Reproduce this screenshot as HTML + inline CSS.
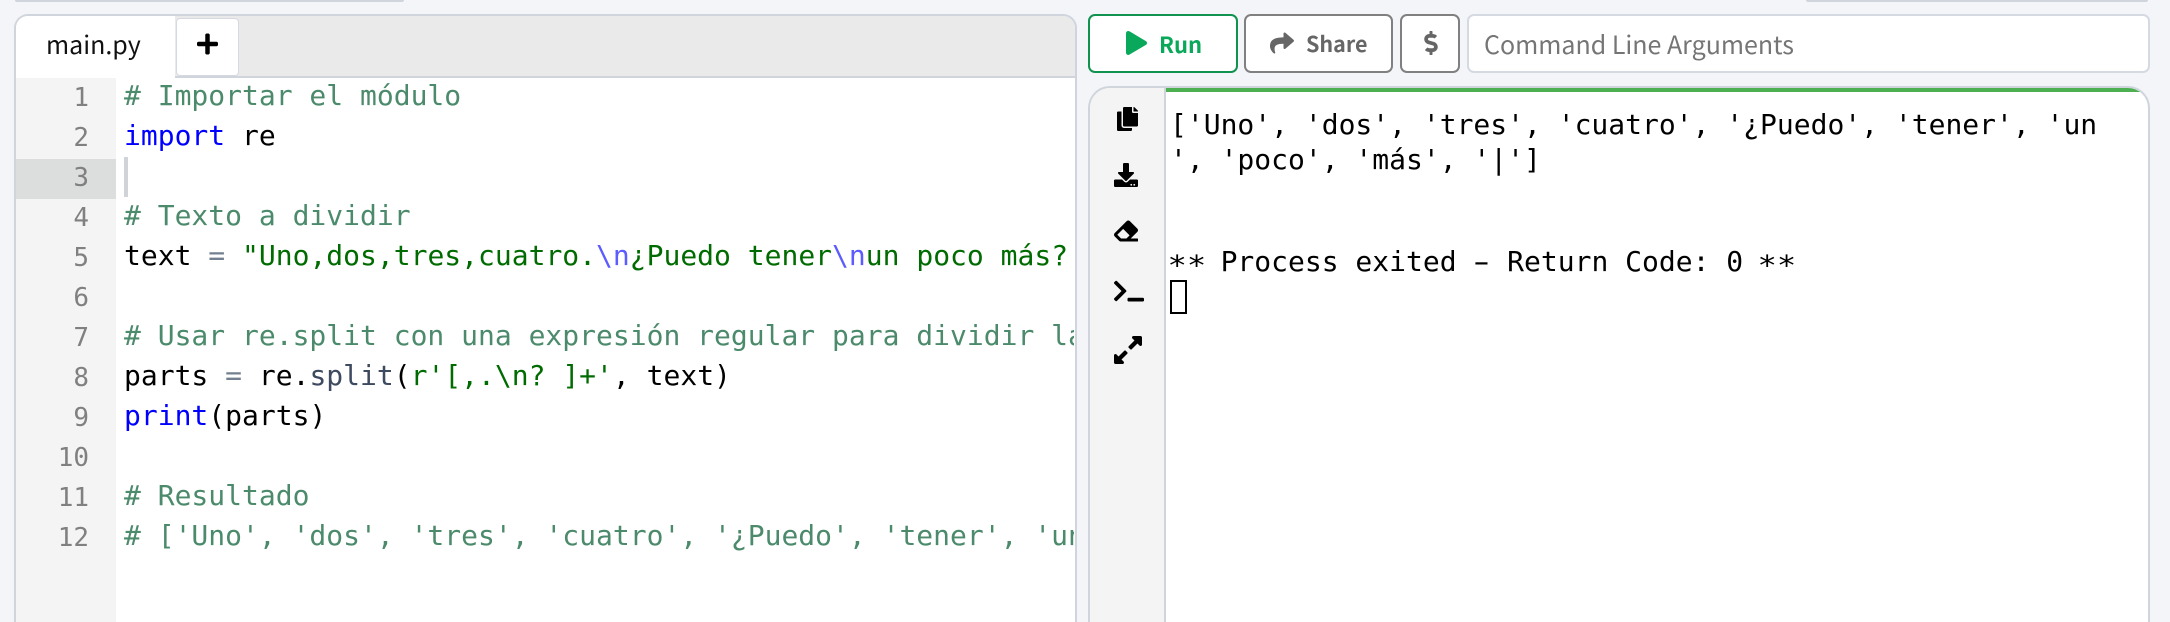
<!DOCTYPE html>
<html lang="es">
<head>
<meta charset="utf-8">
<title>main.py</title>
<style>
html,body{margin:0;padding:0;background:#f3f5f9;width:2170px;height:622px;overflow:hidden;}
#root{position:relative;width:2170px;height:622px;overflow:hidden;background:#f3f5f9;font-family:"Noto Sans CJK JP","Liberation Sans",sans-serif;}
.a{position:absolute;box-sizing:border-box;}
svg{position:absolute;display:block;}
.mono{font-family:"DejaVu Sans Mono","Liberation Mono",monospace;font-size:28px;white-space:pre;}
.ln{position:absolute;left:0;height:40px;line-height:40px;}
.num{position:absolute;left:16px;width:73px;text-align:right;height:40px;line-height:40px;font-family:"DejaVu Sans Mono","Liberation Mono",monospace;font-size:26px;color:#808080;}
.c{color:#4c8a6c}.k{color:#0000ff}.s{color:#006b00}.e{color:#5c5cff}.o{color:#708090}.m{color:#3d4a5f}
.btn{background:#fff;border-radius:7px;height:59px;top:14px;}
.ast{display:inline-block;transform:translateY(4px) scale(1.15,1);}
.dash{display:inline-block;transform:scaleX(1.7);}
</style>
</head>
<body>
<div id="root">
<div class="a" style="left:15px;top:0;width:389px;height:2px;background:#d0d5dd;border-radius:0 0 6px 6px;"></div>
<div class="a" style="left:1806px;top:0;width:342px;height:2px;background:#d0d5dd;border-radius:0 0 6px 6px;"></div>

<!-- editor -->
<div class="a" style="left:14px;top:14px;width:1063px;height:608px;border:2px solid #d0d5dd;border-bottom:none;border-radius:14px 14px 0 0;background:#fff;overflow:hidden;">
  <div class="a" style="left:0;top:0;width:100%;height:62px;background:#eaeaea;border-bottom:2px solid #d0d5dd;"></div>
  <div class="a" style="left:0;top:0;width:159px;height:62px;background:#fff;"></div>
  <div class="a" style="left:160px;top:2px;width:63px;height:58px;background:#fff;border:1px solid #d5d9e0;border-radius:4px;"></div>
  <div class="a" style="left:0;top:62px;width:100px;height:544px;background:#f4f4f4;"></div>
  <div class="a" style="left:0;top:143px;width:100px;height:40px;background:#dcdddd;"></div>
</div>
<div class="a" style="left:46px;top:24px;font-size:25px;line-height:40px;color:#111;">main.py</div>
<svg style="left:197px;top:32px;" width="21" height="24" viewBox="0 0 448 512"><path fill="#000" d="M416 208H272V64c0-17.67-14.33-32-32-32h-32c-17.67 0-32 14.33-32 32v144H32c-17.67 0-32 14.33-32 32v32c0 17.67 14.33 32 32 32h144v144c0 17.67 14.33 32 32 32h32c17.67 0 32-14.33 32-32V304h144c17.67 0 32-14.33 32-32v-32c0-17.67-14.33-32-32-32z"/></svg>

<div class="num" style="top:78px">1</div>
<div class="num" style="top:118px">2</div>
<div class="num" style="top:158px">3</div>
<div class="num" style="top:198px">4</div>
<div class="num" style="top:238px">5</div>
<div class="num" style="top:278px">6</div>
<div class="num" style="top:318px">7</div>
<div class="num" style="top:358px">8</div>
<div class="num" style="top:398px">9</div>
<div class="num" style="top:438px">10</div>
<div class="num" style="top:478px">11</div>
<div class="num" style="top:518px">12</div>

<div class="a" style="left:124px;top:157px;width:4px;height:40px;background:#d0d3d8;"></div>

<div class="a mono" style="left:124px;top:76px;width:950px;height:500px;overflow:hidden;color:#000;">
<div class="ln" style="top:0"><span class="c"># Importar el módulo</span></div>
<div class="ln" style="top:40px"><span class="k">import</span> re</div>
<div class="ln" style="top:120px"><span class="c"># Texto a dividir</span></div>
<div class="ln" style="top:160px">text <span class="o">=</span> <span class="s">"Uno,dos,tres,cuatro.</span><span class="e">\n</span><span class="s">¿Puedo tener</span><span class="e">\n</span><span class="s">un poco más?</span></div>
<div class="ln" style="top:240px"><span class="c"># Usar re.split con una expresión regular para dividir la cadena</span></div>
<div class="ln" style="top:280px">parts <span class="o">=</span> re.<span class="m">split</span>(<span class="s">r'[,.\n? ]+'</span>, text)</div>
<div class="ln" style="top:320px"><span class="k">print</span>(parts)</div>
<div class="ln" style="top:400px"><span class="c"># Resultado</span></div>
<div class="ln" style="top:440px"><span class="c"># ['Uno', 'dos', 'tres', 'cuatro', '¿Puedo', 'tener', 'un', 'poco', 'más', '|']</span></div>
</div>

<!-- buttons -->
<div class="a btn" style="left:1088px;width:150px;border:2px solid #11924f;"></div>
<svg style="left:1126px;top:31px;" width="21" height="24" viewBox="0 0 448 512"><path fill="#0aa85a" d="M424.4 214.7L72.4 6.6C43.8-10.3 0 6.1 0 47.9V464c0 37.5 40.7 60.1 72.4 41.3l352-208c31.4-18.5 31.5-64.1 0-82.6z"/></svg>
<div class="a" style="left:1159px;top:24px;font-size:22px;line-height:40px;font-weight:700;color:#0aa85a;">Run</div>

<div class="a btn" style="left:1244px;width:149px;border:2px solid #808080;"></div>
<svg style="left:1270px;top:31px;" width="24" height="24" viewBox="0 0 512 512"><path fill="#666" d="M503.691 189.836L327.687 37.851C312.281 24.546 288 35.347 288 56.015v80.053C127.371 137.907 0 170.1 0 322.326c0 61.441 39.581 122.309 83.333 154.132 13.653 9.931 33.111-2.533 28.077-18.631-45.344-145.012 21.507-183.51 176.59-185.742V360c0 20.7 24.3 31.453 39.687 18.164l176.004-152c11.071-9.562 11.086-26.753 0-36.328z"/></svg>
<div class="a" style="left:1306px;top:24px;font-size:21.5px;line-height:40px;font-weight:700;color:#666;">Share</div>

<div class="a btn" style="left:1400px;width:60px;border:2px solid #808080;"></div>
<svg style="left:1424px;top:31px;" width="14" height="24" viewBox="0 0 288 512"><path fill="#666" d="M209.2 233.4l-108-31.6C88.7 198.2 80 186.5 80 173.5c0-16.3 13.2-29.5 29.5-29.5h66.3c12.2 0 24.2 3.7 34.2 10.5 6.1 4.1 14.3 3.1 19.5-2l34.8-34c7.1-6.9 6.1-18.4-1.8-24.5C238 74.8 207.4 64.1 176 64V16c0-8.8-7.2-16-16-16h-32c-8.8 0-16 7.2-16 16v48h-2.5C45.8 64-5.4 118.7.5 183.6c4.2 46.1 39.4 83.6 83.8 96.6l102.5 30c12.5 3.7 21.2 15.3 21.2 28.3 0 16.3-13.2 29.5-29.5 29.5h-66.3C100 368 88 364.3 78 357.5c-6.1-4.1-14.3-3.1-19.5 2l-34.8 34c-7.1 6.9-6.1 18.4 1.8 24.5 24.5 19.2 55.1 29.9 86.5 30v48c0 8.8 7.2 16 16 16h32c8.8 0 16-7.2 16-16v-48.2c46.6-.9 90.3-28.6 105.7-72.7 21.5-61.6-14.6-124.8-72.5-141.7z"/></svg>

<div class="a btn" style="left:1467px;width:683px;border:2px solid #d5dae2;"></div>
<div class="a" style="left:1484px;top:24px;font-size:25px;line-height:40px;color:#757575;white-space:nowrap;">Command Line Arguments</div>

<!-- terminal -->
<div class="a" style="left:1088px;top:86px;width:1062px;height:536px;border:2px solid #d0d5dd;border-bottom:none;border-radius:22px 22px 0 0;background:#fff;overflow:hidden;">
  <div class="a" style="left:0;top:0;width:76px;height:100%;background:#f4f4f4;border-right:2px solid #d0d5dd;"></div>
  <div class="a" style="left:76px;top:0;width:100%;height:4px;background:#4caf50;"></div>
</div>
<svg style="left:1117px;top:107px;" width="21" height="24" viewBox="0 0 448 512"><path d="M320 448v40c0 13.255-10.745 24-24 24H24c-13.255 0-24-10.745-24-24V120c0-13.255 10.745-24 24-24h72v296c0 30.879 25.121 56 56 56h168zm0-344V0H152c-13.255 0-24 10.745-24 24v368c0 13.255 10.745 24 24 24h272c13.255 0 24-10.745 24-24V128H344c-13.2 0-24-10.8-24-24zm120.971-31.029L375.029 7.029A24 24 0 0 0 358.059 0H352v96h96v-6.059a24 24 0 0 0-7.029-16.97z"/></svg>
<svg style="left:1114px;top:163px;" width="24" height="24" viewBox="0 0 512 512"><path d="M216 0h80c13.3 0 24 10.7 24 24v168h87.7c17.8 0 26.7 21.5 14.1 34.1L269.7 378.3c-7.5 7.5-19.8 7.5-27.3 0L90.1 226.1c-12.6-12.6-3.7-34.1 14.1-34.1H192V24c0-13.3 10.7-24 24-24zm296 376v112c0 13.3-10.7 24-24 24H24c-13.3 0-24-10.7-24-24V376c0-13.3 10.7-24 24-24h146.7l49 49c20.1 20.1 52.5 20.1 72.6 0l49-49H488c13.3 0 24 10.7 24 24zm-124 88c0-11-9-20-20-20s-20 9-20 20 9 20 20 20 20-9 20-20zm64 0c0-11-9-20-20-20s-20 9-20 20 9 20 20 20 20-9 20-20z"/></svg>
<svg style="left:1114px;top:219px;" width="24" height="24" viewBox="0 0 512 512"><path d="M497.941 273.941c18.745-18.745 18.745-49.137 0-67.882l-160-160c-18.745-18.745-49.137-18.745-67.882 0l-256 256c-18.745 18.745-18.745 49.137 0 67.882l96 96A48.004 48.004 0 0 0 144 480h356c6.627 0 12-5.373 12-12v-40c0-6.627-5.373-12-12-12H355.883l142.058-142.059zm-302.627-62.627l137.373 137.373L265.373 416H150.628l-80-80 124.686-124.686z"/></svg>
<svg style="left:1114px;top:279px;" width="30" height="24" viewBox="0 0 640 512"><path d="M257.981 272.971L63.638 467.314c-9.373 9.373-24.569 9.373-33.941 0L7.029 444.647c-9.357-9.357-9.375-24.522-.04-33.901L161.011 256 6.99 101.255c-9.335-9.379-9.317-24.544.04-33.901l22.667-22.667c9.373-9.373 24.569-9.373 33.941 0L257.981 239.03c9.373 9.372 9.373 24.568 0 33.941zM640 456v-32c0-13.255-10.745-24-24-24H312c-13.255 0-24 10.745-24 24v32c0 13.255 10.745 24 24 24h304c13.255 0 24-10.745 24-24z"/></svg>
<svg style="left:1114px;top:334px;" width="28" height="32" viewBox="0 0 448 512"><path d="M212.686 315.314L120 408l32.922 31.029c15.12 15.12 4.412 40.971-16.97 40.971h-112C10.697 480 0 469.255 0 456V344c0-21.382 25.803-32.09 40.922-16.971L72 360l92.686-92.686c6.248-6.248 16.379-6.248 22.627 0l25.373 25.373c6.249 6.248 6.249 16.378 0 22.627zm22.628-118.628L328 104l-32.922-31.029C279.958 57.851 290.666 32 312.048 32h112C437.303 32 448 42.745 448 56v112c0 21.382-25.803 32.09-40.922 16.971L376 152l-92.686 92.686c-6.248 6.248-16.379 6.248-22.627 0l-25.373-25.373c-6.249-6.248-6.249-16.378 0-22.627z"/></svg>

<div class="a mono" style="left:1170px;top:0;color:#000;">
<div class="ln" style="top:108px;height:34px;line-height:34px;">['Uno', 'dos', 'tres', 'cuatro', '¿Puedo', 'tener', 'un</div>
<div class="ln" style="top:143px;height:34px;line-height:34px;">', 'poco', 'más', '|']</div>
<div class="ln" style="top:245px;height:34px;line-height:34px;"><span class="ast">**</span> Process exited <span class="dash">-</span> Return Code: 0 <span class="ast">**</span></div>
</div>
<div class="a" style="left:1170px;top:280px;width:17px;height:34px;border:2px solid #000;"></div>
</div>
</body>
</html>
